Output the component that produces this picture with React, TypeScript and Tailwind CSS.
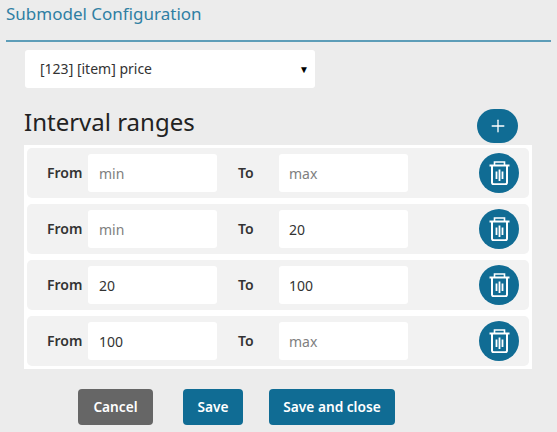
import { Plus } from "lucide-react";

const font = { fontFamily: '"Noto Sans", "Open Sans", sans-serif' };

const ranges = [
  { from: "", to: "" },
  { from: "", to: "20" },
  { from: "20", to: "100" },
  { from: "100", to: "" },
];

function TrashIcon() {
  return (
    <svg viewBox="0 0 21 24" className="h-6 w-[21px]" fill="none" stroke="white">
      <path d="M0.5 4.5h20" strokeWidth="2" />
      <path d="M5.5 4V1h10v3" strokeWidth="1.6" />
      <path d="M3 5v16.5a1.8 1.8 0 0 0 1.8 1.8h11.4a1.8 1.8 0 0 0 1.8-1.8V5" strokeWidth="2" />
      <path d="M7.5 10.5v7.5M10.5 8.5v11.5M13.5 10.5v7.5" strokeWidth="1.8" />
    </svg>
  );
}

function RangeRow({ from, to }: { from: string; to: string }) {
  return (
    <div className="flex h-[50px] items-center rounded-[5px] bg-[#f2f2f2]">
      <label className="ml-5 w-[41px] text-sm font-semibold text-[#333]">From</label>
      <input
        readOnly
        value={from}
        placeholder="min"
        className="h-[38px] w-[129px] rounded-[3px] bg-white px-[11px] text-sm text-[#333] outline-none placeholder:text-[#808080]"
      />
      <label className="ml-[21px] w-[41px] text-sm font-semibold text-[#333]">To</label>
      <input
        readOnly
        value={to}
        placeholder="max"
        className="h-[38px] w-[129px] rounded-[3px] bg-white px-[10px] text-sm text-[#333] outline-none placeholder:text-[#808080]"
      />
      <button
        type="button"
        aria-label="Delete range"
        className="ml-[71px] flex h-10 w-10 items-center justify-center rounded-full bg-[#106c94]"
      >
        <TrashIcon />
      </button>
    </div>
  );
}

export default function App() {
  return (
    <div className="h-[432px] w-[557px] overflow-hidden bg-[#ececec]" style={font}>
      <div className="mx-[6px] h-[42px] w-[545px] border-b-2 border-[#5d9db8] pt-[2px]">
        <h1 className="text-[17px] leading-6 text-[#2f7fa3]">Submodel Configuration</h1>
      </div>

      <div className="ml-[25px] mt-2 flex h-[38px] w-[290px] items-center justify-between rounded-[3px] bg-white pl-[15px] pr-[6px] text-sm text-[#333]">
        <span>[123] [item] price</span>
        <span className="text-[10px] text-black">▼</span>
      </div>

      <div className="ml-6 mt-[21px] flex h-[36px] w-[494px] items-start justify-between">
        <h2 className="text-[24px] leading-[26px] text-[#222]">Interval ranges</h2>
        <button
          type="button"
          aria-label="Add range"
          className="flex h-[34px] w-[41px] items-center justify-center rounded-full bg-[#106c94]"
        >
          <Plus className="h-5 w-5 text-white" strokeWidth={1.6} />
        </button>
      </div>

      <div className="ml-6 flex w-[508px] flex-col gap-[6px] bg-white p-[3px]">
        {ranges.map((range, i) => (
          <RangeRow key={i} from={range.from} to={range.to} />
        ))}
      </div>

      <div className="ml-[78px] mt-5 flex text-[13.7px] font-semibold text-white">
        <button type="button" className="h-9 w-[75px] rounded-[4px] bg-[#666]">Cancel</button>
        <button type="button" className="ml-[30px] h-9 w-[60px] rounded-[4px] bg-[#106c94]">Save</button>
        <button type="button" className="ml-[26px] h-9 w-[126px] rounded-[4px] bg-[#106c94]">Save and close</button>
      </div>
    </div>
  );
}
